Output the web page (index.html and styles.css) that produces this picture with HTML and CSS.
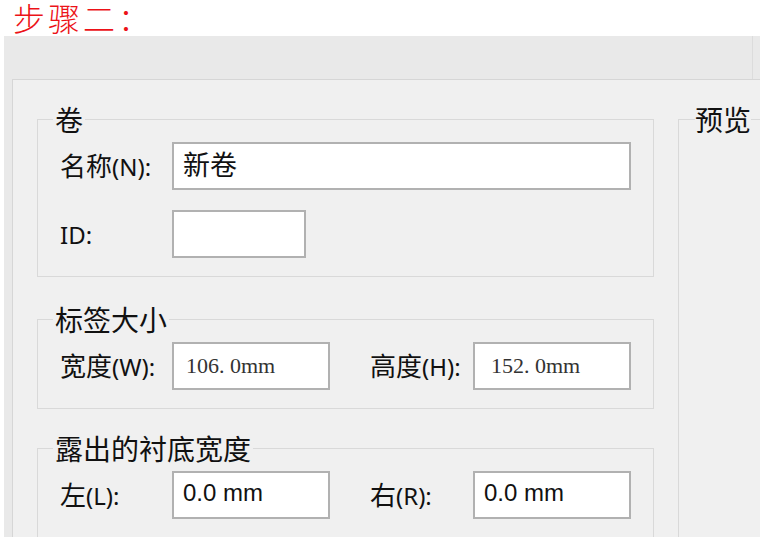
FILE: index.html
```html
<!DOCTYPE html>
<html lang="zh-CN">
<head>
<meta charset="utf-8">
<title>步骤二</title>
<link rel="stylesheet" href="styles.css">
</head>
<body>
<div class="title">步骤二：</div>
<div class="window">
  <div class="strip"></div>
  <div class="panel">
    <div class="col">
      <fieldset class="group g1">
        <legend>卷</legend>
        <div class="grid">
          <div class="lbl">名称<span class="lat">(N):</span></div>
          <div class="field wide cjk">新卷</div>
          <div class="lbl"><span class="lat">ID:</span></div>
          <div class="field id"></div>
        </div>
      </fieldset>
      <fieldset class="group g2">
        <legend>标签大小</legend>
        <div class="grid">
          <div class="lbl">宽度<span class="lat">(W):</span></div>
          <div class="field serif">106. 0mm</div>
          <div></div>
          <div class="lbl">高度<span class="lat">(H):</span></div>
          <div class="field serif far">152. 0mm</div>
        </div>
      </fieldset>
      <fieldset class="group g3">
        <legend>露出的衬底宽度</legend>
        <div class="grid">
          <div class="lbl">左<span class="lat">(L):</span></div>
          <div class="field sans">0.0 mm</div>
          <div></div>
          <div class="lbl">右<span class="lat">(R):</span></div>
          <div class="field sans">0.0 mm</div>
        </div>
      </fieldset>
    </div>
    <fieldset class="preview">
      <legend>预览</legend>
    </fieldset>
  </div>
</div>
</body>
</html>
```
FILE: styles.css
```css
html, body {
  margin: 0;
  padding: 0;
}
body {
  width: 760px;
  height: 537px;
  overflow: hidden;
  background: #ffffff;
  font-family: "Noto Sans", "Noto Sans CJK SC", sans-serif;
  color: #111;
}
.title {
  box-sizing: border-box;
  height: 36px;
  padding-top: 5px;
  line-height: 31px;
  padding-left: 13px;
  font-family: "Liberation Serif", "Noto Sans CJK SC", serif;
  font-size: 32px;
  font-weight: 300;
  letter-spacing: 3px;
  color: #ec1218;
}
.window {
  margin-left: 4px;
  height: 501px;
  background: #e9e9e9;
  display: flex;
  flex-direction: column;
}
.strip {
  height: 43px;
  flex: none;
  margin-right: 7px;
  border-right: 1px solid #dcdcdc;
}
.panel {
  flex: 1;
  margin-left: 8px;
  border-top: 1px solid #d6d6d6;
  border-left: 1px solid #d6d6d6;
  background: #f0f0f0;
  display: flex;
  gap: 24px;
  padding: 24px 0 0 24px;
  overflow: hidden;
}
.col {
  width: 617px;
  flex: none;
}
fieldset {
  margin: 0;
  min-width: 0;
  border: 1px solid #d9d9d9;
}
legend {
  font-family: "Noto Sans CJK SC", sans-serif;
  font-size: 28px;
  line-height: 30px;
  color: #111;
}
.group {
  padding: 8px 22px 18px 22px;
}
.group legend {
  padding: 0 2px;
  margin-left: -7px;
}
.g2 { margin-top: 27px; }
.g3 { margin-top: 24px; }
.grid {
  display: grid;
  grid-template-columns: 112px 158px 40px 103px 158px;
  row-gap: 20px;
  align-items: center;
}
.lbl {
  font-family: "Noto Sans CJK SC", sans-serif;
  font-size: 26px;
  line-height: 30px;
  color: #111;
  white-space: nowrap;
}
.lat {
  font-family: "Noto Sans", sans-serif;
  font-size: 24px;
}
.field {
  box-sizing: border-box;
  height: 48px;
  border: 2px solid #b1b1b1;
  background: #ffffff;
  display: flex;
  align-items: center;
  padding-left: 9px;
  white-space: nowrap;
}
.wide { grid-column: 2 / 6; }
.id { width: 134px; }
.cjk {
  font-family: "Noto Sans CJK SC", sans-serif;
  font-size: 27px;
  color: #111;
  padding-bottom: 6px;
}
.serif {
  font-family: "Liberation Serif", serif;
  font-size: 22px;
  color: #333;
  padding-left: 12px;
}
.far { padding-left: 16px; }
.sans {
  font-family: "Liberation Sans", sans-serif;
  font-size: 24px;
  color: #111;
  padding-bottom: 4px;
}
.preview {
  flex: none;
  width: 200px;
  height: 600px;
  padding: 0 0 0 16px;
}
.preview legend {
  padding: 0;
  font-size: 28px;
}
```
